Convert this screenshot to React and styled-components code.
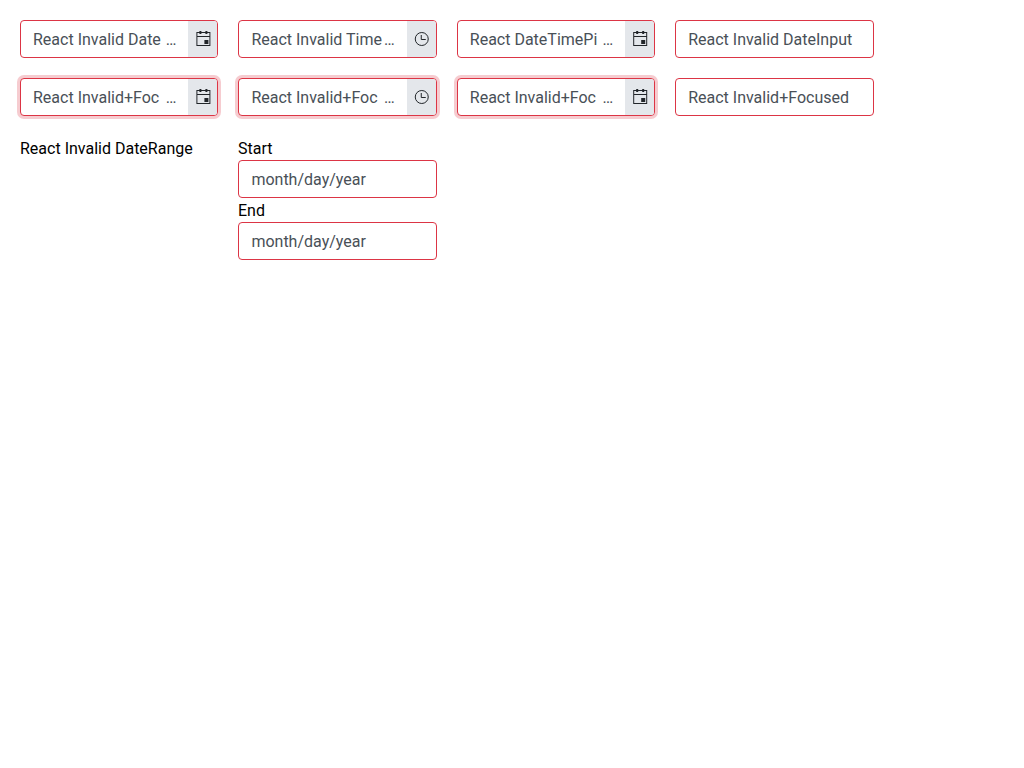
import React from "react";
import styled, { createGlobalStyle } from "styled-components";

const GlobalStyle = createGlobalStyle`
  * { box-sizing: border-box; }
  body {
    margin: 0;
    background: #fff;
    color: #000;
    font-family: Roboto, "Liberation Sans", sans-serif;
    font-size: 16px;
    line-height: 24px;
  }
`;

const Grid = styled.main`
  display: grid;
  grid-template-columns: repeat(4, 198.4px);
  gap: 20px;
  padding: 20px;
`;

const Field = styled.div`
  display: flex;
  height: 38px;
  border: 1px solid #dc3545;
  border-radius: 4px;
  background: #fff;
  color: #495057;
  overflow: hidden;
  box-shadow: ${(p) => (p.$focused ? "0 0 0 3px rgba(220, 53, 69, 0.25)" : "none")};
`;

const Value = styled.div`
  flex: 1;
  min-width: 0;
  display: flex;
  justify-content: space-between;
  padding: 7px 12px 5px;
  white-space: nowrap;
`;

const PickerButton = styled.span`
  flex: none;
  display: flex;
  align-items: center;
  justify-content: flex-end;
  width: 29px;
  padding-right: 6px;
  background: #e4e7eb;
  color: #212529;
`;

const Icon = styled.svg`
  display: block;
  width: 16px;
  height: 16px;
`;

const Range = styled.div`
  display: flex;
  flex-direction: column;
`;

const Label = styled.div`
  height: 24px;
  padding-top: 1px;
  margin-left: ${(p) => (p.$flush ? "-0.4px" : "0")};
`;

const CalendarIcon = ({ nudge }) => (
  <Icon viewBox={`${-nudge} 0 16 16`} fill="currentColor">
    <path d="M1 1h3V0h2v1h4V0h2v1h3v14H1zM2 2v3h12V2h-2v1h-2V2H6v1H4V2zM2 6v8h12V6z" fillRule="evenodd" />
    <path d="M9 9h4v4H9z" />
  </Icon>
);

const ClockIcon = () => (
  <Icon viewBox="0.25 0 16 16" fill="none" stroke="currentColor">
    <circle cx="8" cy="8" r="6.5" />
    <path d="M7.5 4v4.5H12" />
  </Icon>
);

const Picker = ({ text, clock, focused, nudge = 0.4 }) => (
  <Field $focused={focused}>
    <Value>
      <span>{text}</span>
      <span>…</span>
    </Value>
    <PickerButton>{clock ? <ClockIcon /> : <CalendarIcon nudge={nudge} />}</PickerButton>
  </Field>
);

const DateInput = ({ text }) => (
  <Field>
    <Value>{text}</Value>
  </Field>
);

export default function App() {
  return (
    <>
      <GlobalStyle />
      <Grid>
        <Picker text="React Invalid Date" />
        <Picker text="React Invalid Time" clock />
        <Picker text="React DateTimePi" nudge={0.2} />
        <DateInput text="React Invalid DateInput" />
        <Picker text="React Invalid+Foc" focused />
        <Picker text="React Invalid+Foc" clock focused />
        <Picker text="React Invalid+Foc" focused nudge={0.2} />
        <DateInput text="React Invalid+Focused" />
        <Label>React Invalid DateRange</Label>
        <Range>
          <Label $flush>Start</Label>
          <DateInput text="month/day/year" />
          <Label $flush>End</Label>
          <DateInput text="month/day/year" />
        </Range>
      </Grid>
    </>
  );
}
